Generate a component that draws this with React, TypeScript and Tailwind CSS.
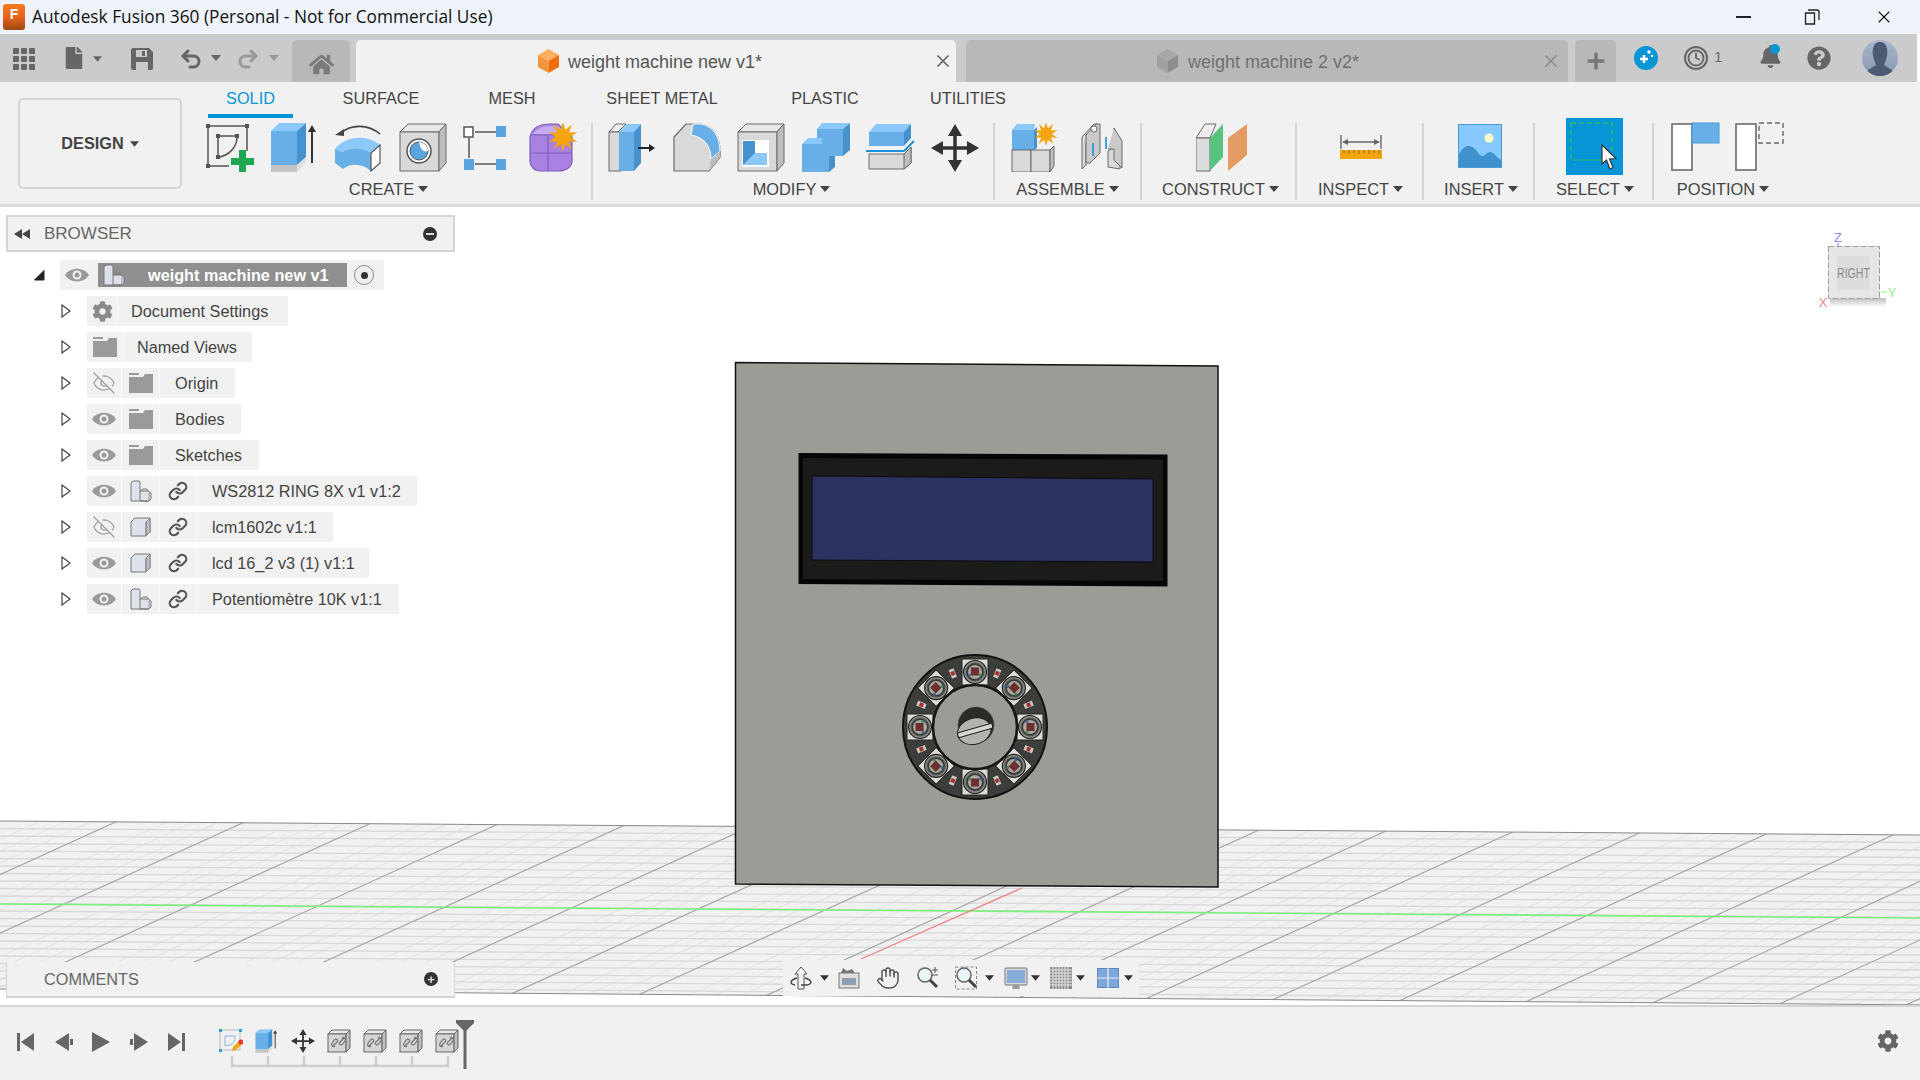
import React from 'react';
import { EyeOff, Hand, Link, Undo2, Redo2, X, Plus, Clock } from 'lucide-react';
import { FaBell, FaCog, FaHome, FaQuestionCircle, FaFile } from 'react-icons/fa';

const BLUE = '#67afe6';
const BLUE_TOP = '#8cc8fb';
const BLUE_SIDE = '#4592ce';
const GREY = '#d9d9d9';
const GREY_SIDE = '#bdbdbd';
const LINE = '#6a6a6a';

const starPoints = (cx: number, cy: number, r: number) => {
    const pts: string[] = [];
    for (let i = 0; i < 20; i++) {
        const rad = i % 2 === 0 ? r : r * 0.5;
        const a = (i * Math.PI) / 10;
        pts.push(`${cx + rad * Math.sin(a)},${cy - rad * Math.cos(a)}`);
    }
    return pts.join(' ');
};

const Tri = ({ c = '#444', w = 10, h = 6 }: { c?: string; w?: number; h?: number }) => (
    <svg width={w} height={h} viewBox="0 0 10 6" className="shrink-0">
        <polygon points="0,0 10,0 5,6" fill={c} />
    </svg>
);

const Sketch = () => (
    <svg width="50" height="49" viewBox="0 0 50 49">
        <g stroke="#555" strokeWidth="1.5" fill="none">
            <path d="M4 3H41M3 4V43M42 4V28M4 43H24" />
            <path d="M13 13H31M13 14V33M32 14C32 24 24 33 13 34" />
        </g>
        <g fill="#555">
            <rect x="1" y="1" width="4" height="4" /><rect x="40" y="1" width="4" height="4" /><rect x="1" y="41" width="4" height="4" />
            <rect x="11" y="11" width="4" height="4" /><rect x="30" y="11" width="4" height="4" /><rect x="11" y="32" width="4" height="4" />
        </g>
        <path d="M34 27h7v8h8v7h-8v7h-7v-7h-8v-7h8z" fill="#1fa64e" />
    </svg>
);

const Extrude = ({ w = 50, h = 49 }: { w?: number; h?: number }) => (
    <svg width={w} height={h} viewBox="0 0 50 49">
        <polygon points="1,8 9,0 36,0 27,8" fill={BLUE_TOP} />
        <rect x="1" y="8" width="26" height="34" fill={BLUE} />
        <polygon points="27,8 36,0 36,34 27,42" fill={BLUE_SIDE} />
        <rect x="1" y="42" width="26" height="7" fill="#c4c4c4" />
        <polygon points="27,42 36,34 36,40 27,49" fill="#dedede" />
        <path d="M42 6V40" stroke="#333" strokeWidth="2" />
        <polygon points="42,2 46,9 38,9" fill="#333" />
    </svg>
);

const Revolve = () => (
    <svg width="50" height="49" viewBox="0 0 50 49">
        <path d="M1 26C10 14 32 10 46 22L37 30C28 24 16 24 9 29Z" fill={BLUE_TOP} />
        <path d="M1 26L9 29C16 24 28 24 37 30V48C28 40 16 40 9 46L1 40Z" fill={BLUE} />
        <polygon points="37,30 46,22 46,40 37,48" fill="#fff" stroke="#555" strokeWidth="1.2" />
        <path d="M7 10C17 1 34 1 46 11" stroke="#444" strokeWidth="1.6" fill="none" />
        <polygon points="1,12 10,6 10,13" fill="#444" />
    </svg>
);

const Hole = () => (
    <svg width="50" height="49" viewBox="0 0 50 49">
        <polygon points="1,9 9,1 47,1 40,9" fill="#e8e8e8" stroke={LINE} />
        <rect x="1" y="9" width="39" height="39" fill={GREY} stroke={LINE} />
        <polygon points="40,9 47,1 47,40 40,48" fill={GREY_SIDE} stroke={LINE} />
        <circle cx="20" cy="28" r="12" fill="#fff" stroke="#555" strokeWidth="1.5" />
        <circle cx="20" cy="28" r="9" fill="#5aa5de" stroke="#555" />
        <path d="M20 19A9 9 0 0 1 29 28C24 30 21 25 20 19Z" fill="#fff" />
    </svg>
);

const Pattern = () => (
    <svg width="44" height="49" viewBox="0 0 44 49" className="mr-[6px]">
        <path d="M12 9H33M6 15V35M12 41H33" stroke="#555" strokeWidth="1.5" />
        <rect x="1" y="4" width="9" height="10" fill="#fff" stroke="#555" strokeWidth="1.5" />
        <rect x="33" y="3" width="10" height="11" fill="#5aa5de" />
        <rect x="1" y="36" width="10" height="11" fill="#5aa5de" />
        <rect x="33" y="36" width="10" height="11" fill="#5aa5de" />
    </svg>
);

const Form = () => (
    <svg width="50" height="49" viewBox="0 0 50 49">
        <path d="M2 14C4 5 12 1 22 1H30L44 14V38C44 44 38 48 30 48H12C6 48 2 43 2 38Z" fill="#a881e2" stroke="#7d62ba" strokeWidth="1.2" />
        <path d="M4 12C8 6 14 3 22 3H30L38 11H4Z" fill="#c6a9f0" />
        <path d="M2 30H44M20 12V48M4 12H38" stroke="#7d62ba" strokeWidth="1.2" fill="none" />
        <polygon points={starPoints(35, 14, 15)} fill="#f4a40e" />
    </svg>
);

const PressPull = () => (
    <svg width="50" height="49" viewBox="0 0 50 49">
        <polygon points="1,9 8,1 18,1 10,9" fill="#eee" stroke={LINE} />
        <rect x="1" y="9" width="12" height="39" fill={GREY} stroke={LINE} />
        <polygon points="11,9 19,1 33,1 26,9" fill={BLUE_TOP} />
        <rect x="11" y="9" width="15" height="39" fill={BLUE} />
        <polygon points="26,9 33,1 33,40 26,48" fill={BLUE_SIDE} />
        <path d="M30 25H42" stroke="#222" strokeWidth="2" />
        <polygon points="47,25 41,21 41,29" fill="#222" />
    </svg>
);

const Fillet = () => (
    <svg width="50" height="49" viewBox="0 0 50 49">
        <path d="M1 14L13 1H28C40 3 47 14 47 28V34L36 48H1Z" fill={GREY} stroke={LINE} strokeWidth="1.2" />
        <path d="M20 1H28C40 3 47 14 47 28L38 36C38 22 30 14 18 12Z" fill={BLUE} stroke="#fff" />
        <path d="M38 36L47 28V34L36 48Z" fill={GREY_SIDE} />
    </svg>
);

const Shell = () => (
    <svg width="50" height="49" viewBox="0 0 50 49">
        <polygon points="1,9 9,1 47,1 40,9" fill="#e8e8e8" stroke={LINE} />
        <rect x="1" y="9" width="39" height="39" fill={GREY} stroke={LINE} />
        <polygon points="40,9 47,1 47,40 40,48" fill={GREY_SIDE} stroke={LINE} />
        <rect x="5" y="17" width="27" height="27" fill="#fff" />
        <rect x="6" y="18" width="12" height="24" fill={BLUE_SIDE} />
        <polygon points="6,42 18,30 30,30 30,42" fill={BLUE_TOP} />
    </svg>
);

const Combine = () => (
    <svg width="50" height="49" viewBox="0 0 50 49">
        <polygon points="15,6 20,0 48,0 41,6" fill={BLUE_TOP} />
        <polygon points="48,0 48,27 41,33 41,6" fill={BLUE_SIDE} />
        <rect x="15" y="6" width="26" height="27" fill={BLUE} />
        <polygon points="0,21 6,15 20,15 20,21" fill={BLUE_TOP} />
        <rect x="0" y="21" width="27" height="28" fill={BLUE} />
        <rect x="27" y="33" width="6" height="11" fill={BLUE_SIDE} />
        <polygon points="27,49 33,44 27,44" fill={BLUE_SIDE} />
    </svg>
);

const Split = () => (
    <svg width="50" height="49" viewBox="0 0 50 49">
        <polygon points="3,9 10,1 45,1 38,9" fill={BLUE_TOP} />
        <rect x="3" y="9" width="35" height="14" fill={BLUE} />
        <polygon points="38,9 45,1 45,15 38,23" fill={BLUE_SIDE} />
        <path d="M0 28H38L48 18" stroke="#1a8fdd" strokeWidth="1.8" fill="none" />
        <polygon points="3,31 38,31 45,24 45,40 38,46 3,46" fill={GREY} stroke={LINE} />
        <polygon points="38,31 45,24 45,40 38,46" fill={GREY_SIDE} stroke={LINE} />
    </svg>
);

const MoveIco = ({ size = 48, c = '#333' }: { size?: number; c?: string }) => (
    <svg width={size} height={size} viewBox="0 0 48 48">
        <path d="M24 6V42M6 24H42" stroke={c} strokeWidth="3.5" />
        <polygon points="24,0 31,12 17,12" fill={c} />
        <polygon points="24,48 31,36 17,36" fill={c} />
        <polygon points="0,24 12,17 12,31" fill={c} />
        <polygon points="48,24 36,17 36,31" fill={c} />
    </svg>
);

const NewComponent = () => (
    <svg width="50" height="49" viewBox="0 0 50 49">
        <polygon points="1,7 6,1 24,1 23,7" fill={BLUE_TOP} />
        <rect x="1" y="7" width="22" height="20" fill={BLUE} />
        <polygon points="23,7 26,4 26,25 23,27" fill={BLUE_SIDE} />
        <rect x="1" y="27" width="19" height="22" fill={GREY} stroke={LINE} />
        <rect x="20" y="27" width="19" height="22" fill={GREY} stroke={LINE} />
        <polygon points="39,27 43,23 43,43 39,49" fill={GREY_SIDE} stroke={LINE} />
        <polygon points={starPoints(35, 11, 12)} fill="#f4a40e" />
    </svg>
);

const Joint = () => (
    <svg width="50" height="49" viewBox="0 0 50 49">
        <path d="M4 14L16 1H20V6L8 20V42L4 46Z" fill={GREY} stroke={LINE} />
        <path d="M8 12L18 1H22V30L12 40H8Z" fill="#c9c9c9" stroke={LINE} />
        <circle cx="16" cy="6" r="3" fill="#fff" stroke={LINE} />
        <path d="M30 28V44L42 46V20L36 5V24Z" fill={GREY} stroke={LINE} />
        <path d="M36 5L44 18V45L36 37V26H30" fill="#c9c9c9" stroke={LINE} />
        <path d="M15 20V33M28 14V26" stroke="#1a8fdd" strokeWidth="1.6" />
    </svg>
);

const Construct = () => (
    <svg width="52" height="49" viewBox="0 0 52 49">
        <polygon points="0,15 9,1 20,1 14,15" fill="#eee" stroke={LINE} />
        <rect x="0" y="15" width="14" height="33" fill="#dcdcdc" stroke={LINE} />
        <polygon points="14,15 27,1 27,34 14,48" fill="#58c27f" />
        <polygon points="32,15 51,1 51,32 32,48" fill="#e39b63" />
    </svg>
);

const Inspect = () => (
    <svg width="42" height="24" viewBox="0 0 42 24">
        <path d="M1 0V14M41 0V14M4 7H38" stroke="#666" strokeWidth="1.4" />
        <polygon points="2,7 8,4 8,10" fill="#666" /><polygon points="40,7 34,4 34,10" fill="#666" />
        <rect x="0" y="15" width="42" height="9" fill="#f4a40e" />
        <path d="M4 15v3M9 15v4M14 15v3M19 15v4M24 15v3M29 15v4M34 15v3M39 15v4" stroke="#8a6a1f" strokeWidth="1" />
    </svg>
);

const Insert = () => (
    <svg width="44" height="44" viewBox="0 0 44 44">
        <rect x="0.5" y="0.5" width="43" height="43" fill="#86c8ff" stroke="#4d9ad6" />
        <circle cx="31" cy="14" r="4.5" fill="#fffbc8" />
        <path d="M1 43V30C7 20 12 20 18 26C22 32 24 34 28 30C32 26 35 28 40 34L43 36V43Z" fill="#3f92ce" />
    </svg>
);

const SelectIco = () => (
    <div className="w-[57px] h-[57px] bg-[#0696d7]">
        <svg width="57" height="57" viewBox="0 0 57 57">
            <rect x="5" y="5" width="41" height="37" fill="none" stroke="#35b866" strokeWidth="1.4" strokeDasharray="5 3" />
            <path d="M36 27V46L40.5 42L44 51L47 49.5L43.5 41L50 40.5Z" fill="#fff" stroke="#333" strokeWidth="1.2" />
        </svg>
    </div>
);

const PositionA = () => (
    <svg width="50" height="49" viewBox="0 0 50 49">
        <rect x="1" y="2" width="20" height="46" fill="#fff" stroke={LINE} strokeWidth="1.6" />
        <rect x="21" y="1" width="27" height="20" fill={BLUE} stroke="#4d9ad6" />
    </svg>
);

const PositionB = () => (
    <svg width="50" height="49" viewBox="0 0 50 49">
        <rect x="1" y="2" width="20" height="46" fill="#fff" stroke={LINE} strokeWidth="1.6" />
        <rect x="24" y="1" width="24" height="20" fill="none" stroke={LINE} strokeWidth="1.4" strokeDasharray="5 3" />
    </svg>
);

const Cube = ({ top, left, right }: { top: string; left: string; right: string }) => (
    <svg width="23" height="24" viewBox="0 0 23 24">
        <polygon points="11.5,0 22,6 11.5,12 1,6" fill={top} />
        <polygon points="1,6 11.5,12 11.5,24 1,18" fill={left} />
        <polygon points="22,6 11.5,12 11.5,24 22,18" fill={right} />
    </svg>
);

const Eye = () => (
    <svg width="24" height="14" viewBox="0 0 24 14">
        <path d="M0 7C5 -1.5 19 -1.5 24 7C19 15.500 5 15.500 0 7Z" fill="#9a9a9a" />
        <circle cx="12" cy="7" r="4.500" fill="#f1f1f1" />
        <circle cx="12" cy="7" r="2.500" fill="#9a9a9a" />
    </svg>
);

const Folder = () => (
    <svg width="24" height="20" viewBox="0 0 24 20">
        <path d="M0 0H10V2H0ZM0 4H14L16 1H24V20H0Z" fill="#9a9a9a" />
    </svg>
);

const CompIco = () => (
    <svg width="22" height="22" viewBox="0 0 22 22">
        <path d="M1 3L3 1H9L10 2V11H18L21 13V19L19 21H1Z" fill="#dde1e9" stroke="#777" strokeWidth="1" />
        <path d="M10 11V21H19M10 11L13 9H17L18 11" stroke="#777" strokeWidth="1" fill="none" />
        <path d="M19 21V13L21 12" stroke="#999" strokeWidth="1" fill="none" />
    </svg>
);

const BodyIco = () => (
    <svg width="21" height="20" viewBox="0 0 21 20">
        <path d="M1 5L5 1H20V15L16 19H1Z" fill="#dde1e9" stroke="#777" strokeWidth="1" />
        <path d="M16 5V19M16 5L20 1V15L16 19Z" fill="#b9bec8" stroke="#888" strokeWidth="1" />
    </svg>
);

const Caret = () => (
    <svg width="10" height="14" viewBox="0 0 10 14">
        <polygon points="1,1 9,7 1,13" fill="#fff" stroke="#444" strokeWidth="1.200" />
    </svg>
);

const treeRows = [
    { label: 'Document Settings', width: 201, first: 'gear' },
    { label: 'Named Views', width: 165, first: 'folder' },
    { label: 'Origin', width: 148, eye: 'off', icon: 'folder' },
    { label: 'Bodies', width: 154, eye: 'on', icon: 'folder' },
    { label: 'Sketches', width: 172, eye: 'on', icon: 'folder' },
    { label: 'WS2812 RING 8X v1 v1:2', width: 330, eye: 'on', icon: 'comp', link: true },
    { label: 'lcm1602c v1:1', width: 246, eye: 'off', icon: 'body', link: true },
    { label: 'lcd 16_2 v3 (1) v1:1', width: 282, eye: 'on', icon: 'body', link: true },
    { label: 'Potentiomètre 10K v1:1', width: 312, eye: 'on', icon: 'comp', link: true },
];

const Cell = ({ w, children }: { w: number; children: React.ReactNode }) => (
    <div style={{ width: w }} className="h-full flex items-center justify-center border-r border-[#fafafa] shrink-0">
        {children}
    </div>
);

const TreeRow = ({ row }: { row: (typeof treeRows)[number] }) => {
    const icon = row.icon === 'folder' ? <Folder /> : row.icon === 'comp' ? <CompIco /> : <BodyIco />;
    return (
        <div className="flex items-center h-[30px] mb-[6px]">
            <div className="w-[87px] pl-[61px] flex items-center shrink-0"><Caret /></div>
            <div style={{ width: row.width }} className="h-full flex items-center bg-[#f1f1f1]">
                {row.first === 'gear' && <Cell w={31}><FaCog size={21} color="#8a8a8a" /></Cell>}
                {row.first === 'folder' && <Cell w={37}><Folder /></Cell>}
                {row.eye && <Cell w={35}>{row.eye === 'on' ? <Eye /> : <EyeOff size={24} color="#a0a0a0" strokeWidth={1.300} />}</Cell>}
                {row.icon && <Cell w={38}>{icon}</Cell>}
                {row.link && <Cell w={37}><Link size={20} color="#555" strokeWidth={2.600} /></Cell>}
                <span className={`${row.eye ? 'pl-[15px]' : 'pl-[13px]'} text-[16.25px] text-[#444] whitespace-nowrap`}>{row.label}</span>
            </div>
        </div>
    );
};

const RibbonLabel = ({ text, className = '' }: { text: string; className?: string }) => (
    <div className={`h-[26px] flex items-center justify-center gap-[4px] text-[16.4px] text-[#444] whitespace-nowrap ${className}`}>
        {text}<Tri />
    </div>
);

const Sep = () => <div className="w-[2px] h-[77px] mt-[5px] bg-[#d4d4d4] shrink-0" />;

const tabs = [
    { label: 'SOLID', w: 'w-[85px] ml-[8px]', active: true },
    { label: 'SURFACE', w: 'w-[176px]' },
    { label: 'MESH', w: 'w-[86px]' },
    { label: 'SHEET METAL', w: 'w-[214px]' },
    { label: 'PLASTIC', w: 'w-[112px]' },
    { label: 'UTILITIES', w: 'w-[174px]' },
];

// floor grid, coordinates are screen pixels
const topY = (x: number) => 821 + x * 0.0073;
const botY = (x: number) => 989 + x * 0.0083;

const Floor = () => {
    const rows: number[] = [];
    for (let i = 1; i < 23; i++) rows.push(i * 7.500);
    // one major line every five, the first major one leaves the top edge at x=115
    const diag: { x: number; major: boolean }[] = [];
    for (let i = -5; i < 90; i++) diag.push({ x: 17 + i * 25.800, major: i % 5 === 0 });
    return (
        <g>
            <clipPath id="floor">
                <polygon points={`0,${topY(0)} 1920,${topY(1920)} 1920,${botY(1920)} 0,${botY(0)}`} />
            </clipPath>
            <g clipPath="url(#floor)">
                <rect x="0" y="800" width="1920" height="220" fill="#f1f1f1" />
                {diag.filter(d => !d.major).map(d => (
                    <line key={d.x} x1={d.x} y1="820" x2={d.x - 440} y2="1020" stroke="#e2e2e2" />
                ))}
                {rows.map((y, i) => (
                    <line key={i} x1="0" y1={topY(0) + y} x2="1920" y2={topY(1920) + y} stroke="#d8d8d8" strokeWidth="1.300" />
                ))}
                {diag.filter(d => d.major).map(d => (
                    <line key={d.x} x1={d.x + 103} y1="820" x2={d.x - 337} y2="1020" stroke="#a4a4a4" strokeWidth="1.100" />
                ))}
                <line x1="0" y1="904" x2="1920" y2="918" stroke="#7cf07c" strokeWidth="1.600" />
                <line x1="1022" y1="888" x2="861" y2="959" stroke="#ef8080" strokeWidth="1.200" />
            </g>
            <line x1="0" y1={topY(0)} x2="1920" y2={topY(1920)} stroke="#888" />
            <line x1="0" y1={botY(0)} x2="1920" y2={botY(1920)} stroke="#888" />
        </g>
    );
};

const leds = [0, 45, 90, 135, 180, 225, 270, 315];

const Ring = () => (
    <g>
        <circle cx="975" cy="727" r="72" fill="#3d3d3b" stroke="#111" strokeWidth="2" />
        {leds.map(a => (
            <g key={a} transform={`rotate(${a} 975 727)`}>
                <g transform="rotate(22.500 975 727)">
                    <rect x="972" y="664" width="6" height="10" fill="#c9c9c4" stroke="#222" strokeWidth="0.600" />
                    <rect x="973" y="667" width="4" height="4" fill="#a83232" />
                </g>
                <rect x="962" y="659" width="26" height="26" fill="#dcdcd6" stroke="#222" />
                <circle cx="975" cy="672" r="11.500" fill="#8a8a86" stroke="#222" strokeWidth="1.200" />
                <circle cx="975" cy="672" r="9" fill="#3a3a38" stroke="#555" />
                <circle cx="975" cy="672" r="7" fill="#a9a9a4" />
                <rect x="971" y="667.500" width="8" height="8" fill="#6e2f2f" />
                <circle cx="969.500" cy="675" r="1.500" fill="#3d6a9c" />
                <circle cx="980.500" cy="675" r="1.500" fill="#3e8a55" />
            </g>
        ))}
        <circle cx="975" cy="727" r="42" fill="#9c9c96" stroke="#161616" strokeWidth="2.500" />
        <circle cx="976" cy="725" r="18" fill="#2b2b28" stroke="#555" strokeDasharray="2 2" />
        <g transform="rotate(-16 975 730)">
            <ellipse cx="974" cy="731" rx="17" ry="13" fill="#b4b4ae" stroke="#222" />
            <rect x="957" y="728" width="36" height="5" rx="2" fill="#d8d8d2" stroke="#222" />
        </g>
    </g>
);

const Model = () => (
    <g>
        <polygon points="735.500,362.500 1218,366 1218,887 735.500,884" fill="#9c9c96" stroke="#111" strokeWidth="1.500" />
        <polygon points="798.500,453 1167.500,454.500 1167.500,586.500 798.500,584" fill="#060606" />
        <polygon points="803,458 1163,459.500 1163,581 803,579" fill="#1b1b19" />
        <polygon points="812,476 1153,479 1153,562 812,560" fill="#2d3160" stroke="#0c0c14" strokeWidth="1" />
        <Ring />
    </g>
);

const ViewCube = () => (
    <g>
        <defs>
            <linearGradient id="cubeShadow" x1="0" y1="0" x2="0" y2="1">
                <stop offset="0" stopColor="#bdbdbd" />
                <stop offset="1" stopColor="#ffffff" />
            </linearGradient>
        </defs>
        <rect x="1830" y="298" width="56" height="9" fill="url(#cubeShadow)" />
        <rect x="1828.500" y="246.500" width="51" height="52" fill="#e6e6e6" stroke="#9a9a9a" strokeDasharray="6 2" />
        <rect x="1837" y="256" width="33" height="34" fill="#dcdcdc" />
        <text x="1853.500" y="278" textAnchor="middle" fontSize="14" fill="#8c8c8c" fontFamily="'Liberation Sans', sans-serif" textLength="33" lengthAdjust="spacingAndGlyphs">RIGHT</text>
        <text x="1838" y="242" textAnchor="middle" fontSize="13" fill="#8a8aff" fontFamily="'Liberation Sans', sans-serif">Z</text>
        <text x="1892" y="297" textAnchor="middle" fontSize="13" fill="#8ff08f" fontFamily="'Liberation Sans', sans-serif">Y</text>
        <text x="1823" y="307" textAnchor="middle" fontSize="13" fill="#f08a8a" fontFamily="'Liberation Sans', sans-serif">X</text>
        <path d="M1881 292H1887" stroke="#8ff08f" strokeWidth="1.200" />
        <path d="M1838 243V246" stroke="#8a8aff" strokeWidth="1.200" />
    </g>
);

const Orbit = () => (
    <svg width="24" height="24" viewBox="0 0 24 24">
        <polygon points="12,1 18,8 15,8 15,23 9,23 9,8 6,8" fill="#f4f4f4" stroke="#555" strokeWidth="1" />
        <path d="M8 12C1 14 0 18 6 19M16 12C23 14 24 18 18 19H12" stroke="#444" strokeWidth="1.400" fill="none" />
    </svg>
);

const PanWindow = () => (
    <svg width="22" height="22" viewBox="0 0 22 22">
        <rect x="1" y="6" width="20" height="15" fill="#dedede" stroke="#777" />
        <rect x="4" y="11" width="14" height="7" fill="#8f9fb2" />
        <path d="M3 6L5 1L9 4L14 2L17 6" fill="#777" />
    </svg>
);

const ZoomIco = ({ win }: { win?: boolean }) => (
    <svg width="24" height="24" viewBox="0 0 24 24">
        {win && <rect x="0.500" y="1" width="21" height="22" fill="none" stroke="#888" strokeDasharray="3 2" />}
        <circle cx="9" cy="9" r="7" fill="#eaf6f8" stroke="#666" strokeWidth="1.500" />
        <path d="M14 14L21 21" stroke="#444" strokeWidth="3" />
        {!win && <path d="M19 1V7M16 4H22M16 9H22" stroke="#555" strokeWidth="1" />}
    </svg>
);

const Monitor = () => (
    <svg width="24" height="23" viewBox="0 0 24 23">
        <rect x="1" y="1" width="22" height="17" rx="1" fill="#d9d9d9" stroke="#777" />
        <rect x="3" y="3" width="18" height="13" fill="#88aad6" />
        <path d="M9 18H15L16 22H8Z" fill="#999" />
    </svg>
);

const GridIco = () => (
    <svg width="22" height="22" viewBox="0 0 22 22">
        <rect x="0" y="0" width="22" height="22" fill="#8b8b8b" />
        <path d="M3 0V22M6 0V22M9 0V22M12 0V22M15 0V22M18 0V22M0 3H22M0 6H22M0 9H22M0 12H22M0 15H22M0 18H22" stroke="#e8e8e8" strokeWidth="1" />
    </svg>
);

const Viewports = () => (
    <svg width="22" height="20" viewBox="0 0 22 20">
        <rect x="0.500" y="0.500" width="21" height="19" fill="#7fa6d8" stroke="#5c86bd" />
        <path d="M11 0V20M0 10H22" stroke="#e8eef6" strokeWidth="1.200" />
    </svg>
);

const LinkBlock = () => (
    <svg width="24" height="24" viewBox="0 0 24 24">
        <polygon points="1,5 5,1 23,1 19,5" fill="#e8e8e8" stroke="#666" />
        <rect x="1" y="5" width="18" height="18" fill="#d6d6d6" stroke="#666" />
        <polygon points="19,5 23,1 23,19 19,23" fill="#bdbdbd" stroke="#666" />
        <path d="M6 17L10 13C12 11 9 9 7.500 11L5 14C3.500 16 6 19 8 17M17 9L13 13C11 15 14 17 15.500 15L18 12C19.500 10 17 7 15 9" stroke="#777" strokeWidth="1.200" fill="none" />
    </svg>
);

const TimelineSketch = () => (
    <svg width="24" height="24" viewBox="0 0 24 24">
        <rect x="1" y="1" width="20" height="20" fill="none" stroke="#bbb" />
        <path d="M6 7H16V9C16 14 12 16 6 17Z" fill="none" stroke="#8ab8e0" />
        <g fill="#2e9be6"><rect x="0" y="0" width="3" height="3" /><rect x="20" y="0" width="3" height="3" /><rect x="0" y="20" width="3" height="3" /></g>
        <path d="M13 22L14 18L21 11L24 14L17 21Z" fill="#f4a40e" />
        <circle cx="22" cy="13" r="2.500" fill="#e33" />
    </svg>
);

const PlayBtn = ({ kind }: { kind: string }) => (
    <svg width="20" height="20" viewBox="0 0 20 20">
        {kind === 'first' && <path d="M1 1H4V19H1ZM18 1V19L5 10Z" fill="#666" />}
        {kind === 'prev' && <path d="M15 1V19L1 10ZM16 7H19V13H16Z" fill="#666" />}
        {kind === 'play' && <path d="M1 0L19 10L1 20Z" fill="#666" />}
        {kind === 'next' && <path d="M5 1V19L19 10ZM1 7H4V13H1Z" fill="#666" />}
        {kind === 'last' && <path d="M16 1H19V19H16ZM2 1V19L15 10Z" fill="#666" />}
    </svg>
);

export default function App() {
    return (
        <div className="w-[1920px] h-screen flex flex-col overflow-hidden bg-white font-['Liberation_Sans',Arial,sans-serif]">
            {/* Title bar */}
            <div className="h-[34px] bg-[#eff3fb] flex items-center shrink-0">
                <div className="ml-[3px] w-[22px] h-[26px] rounded-[3px] bg-gradient-to-b from-[#f47a1e] via-[#e8641b] to-[#9c4a12] text-white text-[14px] font-bold flex justify-center leading-[20px]">F</div>
                <span className="ml-[7px] text-[17.3px] text-[#111] font-['Open_Sans',sans-serif] whitespace-nowrap">Autodesk Fusion 360 (Personal - Not for Commercial Use)</span>
                <div className="ml-auto flex items-center">
                    <div className="w-[15px] h-[1.500px] bg-[#222]" />
                    <svg width="16" height="16" viewBox="0 0 16 16" className="ml-[53px]">
                        <path d="M4 1H13C14 1 15 2 15 3V11M1.500 4H10.500V15H1.500Z" fill="none" stroke="#222" strokeWidth="1.300" />
                    </svg>
                    <X size={20} strokeWidth={1.300} color="#111" className="ml-[54px] mr-[26px]" />
                </div>
            </div>

            {/* Quick access + document tabs */}
            <div className="h-[48px] bg-[#cbcbcb] flex shrink-0 mr-[3px]">
                <svg width="22" height="22" viewBox="0 0 22 22" className="ml-[13px] mt-[14px]">
                    {[0, 8, 16].map(x => [0, 8, 16].map(y => <rect key={`${x}-${y}`} x={x} y={y} width="6" height="6" rx="1" fill="#666" />))}
                </svg>
                <FaFile size={22} color="#666" className="ml-[28px] mt-[13px]" />
                <div className="ml-[8px] mt-[22px]"><Tri c="#666" w={9} h={6} /></div>
                <svg width="22" height="22" viewBox="0 0 22 22" className="ml-[29px] mt-[14px]">
                    <path d="M0 2C0 1 1 0 2 0H18L22 4V20C22 21 21 22 20 22H2C1 22 0 21 0 20ZM5 2V9H16V2ZM5 14V22H17V14Z" fill="#666" fillRule="evenodd" />
                    <rect x="11" y="3" width="3" height="5" fill="#666" />
                </svg>
                <Undo2 size={24} color="#666" strokeWidth={3} className="ml-[26px] mt-[13px]" />
                <div className="ml-[8px] mt-[21px]"><Tri c="#666" w={10} h={6} /></div>
                <Redo2 size={24} color="#999" strokeWidth={3} className="ml-[15px] mt-[13px]" />
                <div className="ml-[9px] mt-[21px]"><Tri c="#999" w={10} h={6} /></div>
                <div className="ml-[13px] mt-[6px] w-[58px] h-[42px] bg-[#b8b8b8] rounded-t-[5px] flex items-center justify-center">
                    <FaHome size={25} color="#7a7a7a" className="mt-[6px]" />
                </div>
                <div className="ml-[6px] mt-[6px] w-[600px] h-[42px] bg-[#f1f1f1] rounded-t-[5px] flex items-center pl-[181px] pr-[3px]">
                    <Cube top="#ffb061" left="#f4943c" right="#f26d0e" />
                    <span className="ml-[8px] mt-[3px] text-[18px] text-[#555] whitespace-nowrap">weight machine new v1*</span>
                    <X size={20} color="#666" strokeWidth={2} className="ml-auto" />
                </div>
                <div className="ml-[10px] mt-[6px] w-[602px] h-[42px] bg-[#b8b8b8] rounded-t-[5px] flex items-center pl-[190px] pr-[7px]">
                    <Cube top="#a8a8a8" left="#a0a0a0" right="#8d8d8d" />
                    <span className="ml-[9px] mt-[3px] text-[18px] text-[#707070] whitespace-nowrap">weight machine 2 v2*</span>
                    <X size={20} color="#8a8a8a" strokeWidth={2} className="ml-auto" />
                </div>
                <div className="ml-[7px] mt-[6px] w-[41px] h-[42px] bg-[#b8b8b8] rounded-t-[5px] flex items-center justify-center">
                    <Plus size={24} color="#777" strokeWidth={3.500} />
                </div>
                <svg width="24" height="24" viewBox="0 0 24 24" className="ml-[18px] mt-[12px]">
                    <circle cx="12" cy="12" r="12" fill="#0696d7" />
                    <path d="M6 13H14M10 9V17" stroke="#fff" strokeWidth="2.500" />
                    <circle cx="15" cy="6" r="1.800" fill="#fff" /><circle cx="18" cy="10" r="1.200" fill="#fff" />
                </svg>
                <div className="ml-[26px] mt-[12px] w-[24px] h-[24px] rounded-full bg-[#cbcbcb] border-[2px] border-[#666] flex items-center justify-center">
                    <Clock size={18} color="#666" strokeWidth={2.500} />
                </div>
                <span className="ml-[6px] mt-[14px] text-[15px] text-[#666] leading-[18px]">1</span>
                <div className="ml-[37px] mt-[11px] relative">
                    <FaBell size={23} color="#666" />
                    <div className="absolute -top-[1px] left-[11px] w-[10px] h-[10px] rounded-full bg-[#0696d7]" />
                </div>
                <FaQuestionCircle size={24} color="#666" className="ml-[25px] mt-[12px]" />
                <div className="ml-[31px] mt-[6px] w-[36px] h-[36px] rounded-full bg-gradient-to-b from-[#a9b6cb] to-[#8898b2] overflow-hidden flex justify-center">
                    <svg width="36" height="36" viewBox="0 0 36 36">
                        <path d="M18 2C25 2 26 10 25 16C24 20 23 22 22 25C26 28 31 29 34 36H2C5 29 10 28 14 25C13 22 12 20 11 16C10 10 11 2 18 2Z" fill="#4b5a72" />
                    </svg>
                </div>
            </div>

            {/* Ribbon */}
            <div className="h-[125px] bg-[#f1f1f1] border-b-[3px] border-[#dadada] flex shrink-0">
                <div className="w-[200px] pl-[18px] pt-[16px] shrink-0">
                    <div className="w-[164px] h-[91px] rounded-[5px] border-[2px] border-[#d6d6d6] flex items-center justify-center gap-[6px] text-[16.25px] font-bold text-[#444]">
                        DESIGN <Tri w={9} />
                    </div>
                </div>
                <div className="flex-1 flex flex-col">
                    <div className="h-[36px] flex shrink-0">
                        {tabs.map(t => (
                            <div key={t.label} className={`${t.w} h-full text-center text-[16.25px] leading-[32px] ${t.active ? 'text-[#0696d7] border-b-[4px] border-[#0696d7]' : 'text-[#444]'}`}>
                                {t.label}
                            </div>
                        ))}
                    </div>
                    <div className="flex">
                        <div className="w-[391px] shrink-0">
                            <div className="h-[58px] flex items-end gap-[14.6px] pl-[5px] pb-[4px]">
                                <Sketch /><Extrude /><Revolve /><Hole /><Pattern /><Form />
                            </div>
                            <RibbonLabel text="CREATE" className="pr-[14px]" />
                        </div>
                        <Sep />
                        <div className="w-[400px] shrink-0">
                            <div className="h-[58px] flex items-end gap-[14.6px] pl-[15px] pb-[4px]">
                                <PressPull /><Fillet /><Shell /><Combine /><Split /><MoveIco />
                            </div>
                            <RibbonLabel text="MODIFY" className="pr-[3px]" />
                        </div>
                        <Sep />
                        <div className="w-[145px] shrink-0">
                            <div className="h-[58px] flex items-end gap-[17px] pl-[16px] pb-[4px]">
                                <NewComponent /><Joint />
                            </div>
                            <RibbonLabel text="ASSEMBLE" />
                        </div>
                        <Sep />
                        <div className="w-[153px] shrink-0">
                            <div className="h-[58px] flex items-end justify-center pl-[7px] pb-[4px]"><Construct /></div>
                            <RibbonLabel text="CONSTRUCT" className="pl-[4px]" />
                        </div>
                        <Sep />
                        <div className="w-[125px] shrink-0">
                            <div className="h-[58px] flex items-end justify-center pl-[3px] pb-[17px]"><Inspect /></div>
                            <RibbonLabel text="INSPECT" className="pl-[2px]" />
                        </div>
                        <Sep />
                        <div className="w-[109px] shrink-0">
                            <div className="h-[58px] flex items-start justify-center pl-[2px] pt-[6px]"><Insert /></div>
                            <RibbonLabel text="INSERT" className="pl-[5px]" />
                        </div>
                        <Sep />
                        <div className="w-[117px] shrink-0">
                            <div className="h-[58px] flex justify-center pl-[2px]"><SelectIco /></div>
                            <RibbonLabel text="SELECT" className="pl-[3px]" />
                        </div>
                        <Sep />
                        <div className="w-[136px] shrink-0">
                            <div className="h-[58px] flex items-start gap-[14px] pl-[17px] pt-[4px]">
                                <PositionA /><PositionB />
                            </div>
                            <RibbonLabel text="POSITION" className="pl-[2px]" />
                        </div>
                    </div>
                </div>
            </div>

            {/* Canvas */}
            <div className="relative flex-1 overflow-hidden">
                <svg width="1920" height="798" viewBox="0 207 1920 798" className="absolute inset-0">
                    <Floor />
                    <Model />
                    <ViewCube />
                </svg>

                {/* Browser panel */}
                <div className="absolute left-0 top-[8px] w-[460px]">
                    <div className="ml-[6px] w-[449px] h-[37px] bg-[#f1f1f1] border-[2px] border-[#d4d4d4] flex items-center mb-[8px]">
                        <svg width="16" height="10" viewBox="0 0 16 10" className="ml-[6px]">
                            <path d="M8 0V10L0 5ZM16 0V10L8 5Z" fill="#444" />
                        </svg>
                        <span className="ml-[14px] text-[17px] text-[#666]">BROWSER</span>
                        <div className="ml-auto mr-[16px] w-[14px] h-[14px] rounded-full bg-[#333] flex items-center justify-center">
                            <div className="w-[8px] h-[2px] bg-[#ddd]" />
                        </div>
                    </div>
                    <div className="flex items-center h-[30px] mb-[6px]">
                        <svg width="11" height="11" viewBox="0 0 11 11" className="ml-[34px]">
                            <polygon points="10,0.500 10,10 0.500,10" fill="#222" stroke="#222" />
                        </svg>
                        <div className="ml-[15px] w-[324px] h-full bg-[#f1f1f1] flex items-center">
                            <div className="ml-[5px]"><Eye /></div>
                            <div className="ml-[9px] w-[249px] h-[24px] bg-[#8f8f8f] flex items-center">
                                <div className="ml-[5px]"><CompIco /></div>
                                <span className="ml-[23px] text-[16.25px] font-bold text-white whitespace-nowrap">weight machine new v1</span>
                            </div>
                            <div className="ml-[7px] w-[20px] h-[20px] rounded-full bg-[#eee] border-[1.500px] border-[#888] flex items-center justify-center">
                                <div className="w-[7px] h-[7px] rounded-full bg-[#333]" />
                            </div>
                        </div>
                    </div>
                    {treeRows.map(r => <TreeRow key={r.label} row={r} />)}
                </div>

                {/* Comments panel */}
                <div className="absolute left-[6px] top-[755px] w-[449px] h-[36px] bg-[#f1f1f1] border-x border-b-[2px] border-[#d4d4d4] flex items-center">
                    <span className="ml-[37px] text-[16.25px] text-[#666]">COMMENTS</span>
                    <div className="ml-auto mr-[16px] w-[14px] h-[14px] rounded-full bg-[#333] flex items-center justify-center text-[#ddd] text-[13px] font-bold leading-none">+</div>
                </div>

                {/* Navigation bar */}
                <div className="absolute left-[783px] top-[753px] w-[356px] h-[36px] bg-[#f1f1f1] flex items-center pl-[6px]">
                    <Orbit />
                    <div className="ml-[7px]"><Tri c="#333" w={9} h={6} /></div>
                    <div className="ml-[9px]"><PanWindow /></div>
                    <Hand size={24} color="#555" strokeWidth={1.500} className="ml-[16px]" />
                    <div className="ml-[16px]"><ZoomIco /></div>
                    <div className="ml-[15px]"><ZoomIco win /></div>
                    <div className="ml-[6px]"><Tri c="#333" w={9} h={6} /></div>
                    <div className="ml-[10px]"><Monitor /></div>
                    <div className="ml-[3px]"><Tri c="#333" w={9} h={6} /></div>
                    <div className="ml-[10px]"><GridIco /></div>
                    <div className="ml-[4px]"><Tri c="#333" w={9} h={6} /></div>
                    <div className="ml-[12px]"><Viewports /></div>
                    <div className="ml-[5px]"><Tri c="#333" w={9} h={6} /></div>
                </div>
            </div>

            {/* Timeline */}
            <div className="h-[75px] bg-[#f1f1f1] border-t-[2px] border-[#d4d4d4] flex shrink-0 relative">
                <div className="flex items-center gap-[17.500px] pl-[16px] h-[70px]">
                    {['first', 'prev', 'play', 'next', 'last'].map(k => <PlayBtn key={k} kind={k} />)}
                </div>
                <div className="ml-[33px] pt-[22px]">
                    <div className="flex gap-[12px]">
                        <TimelineSketch />
                        <Extrude w={24} h={24} />
                        <MoveIco size={24} />
                        <LinkBlock /><LinkBlock /><LinkBlock /><LinkBlock />
                    </div>
                    <svg width="240" height="12" viewBox="0 0 240 12" className="mt-[3px]">
                        <path d="M13 0V10H229V0M49 0V10M85 0V10M121 0V10M157 0V10M193 0V10" fill="none" stroke="#cfcfcf" strokeWidth="2.500" />
                    </svg>
                </div>
                <svg width="18" height="49" viewBox="0 0 18 49" className="absolute left-[456px] top-[13px]">
                    <path d="M0 0H18V3L10 11V49H8V11L0 3Z" fill="#666" />
                    <rect x="7.500" y="8" width="3" height="41" fill="#666" />
                </svg>
                <FaCog size={22} color="#666" className="ml-auto mr-[21px] mt-[23px]" />
            </div>
        </div>
    );
}
